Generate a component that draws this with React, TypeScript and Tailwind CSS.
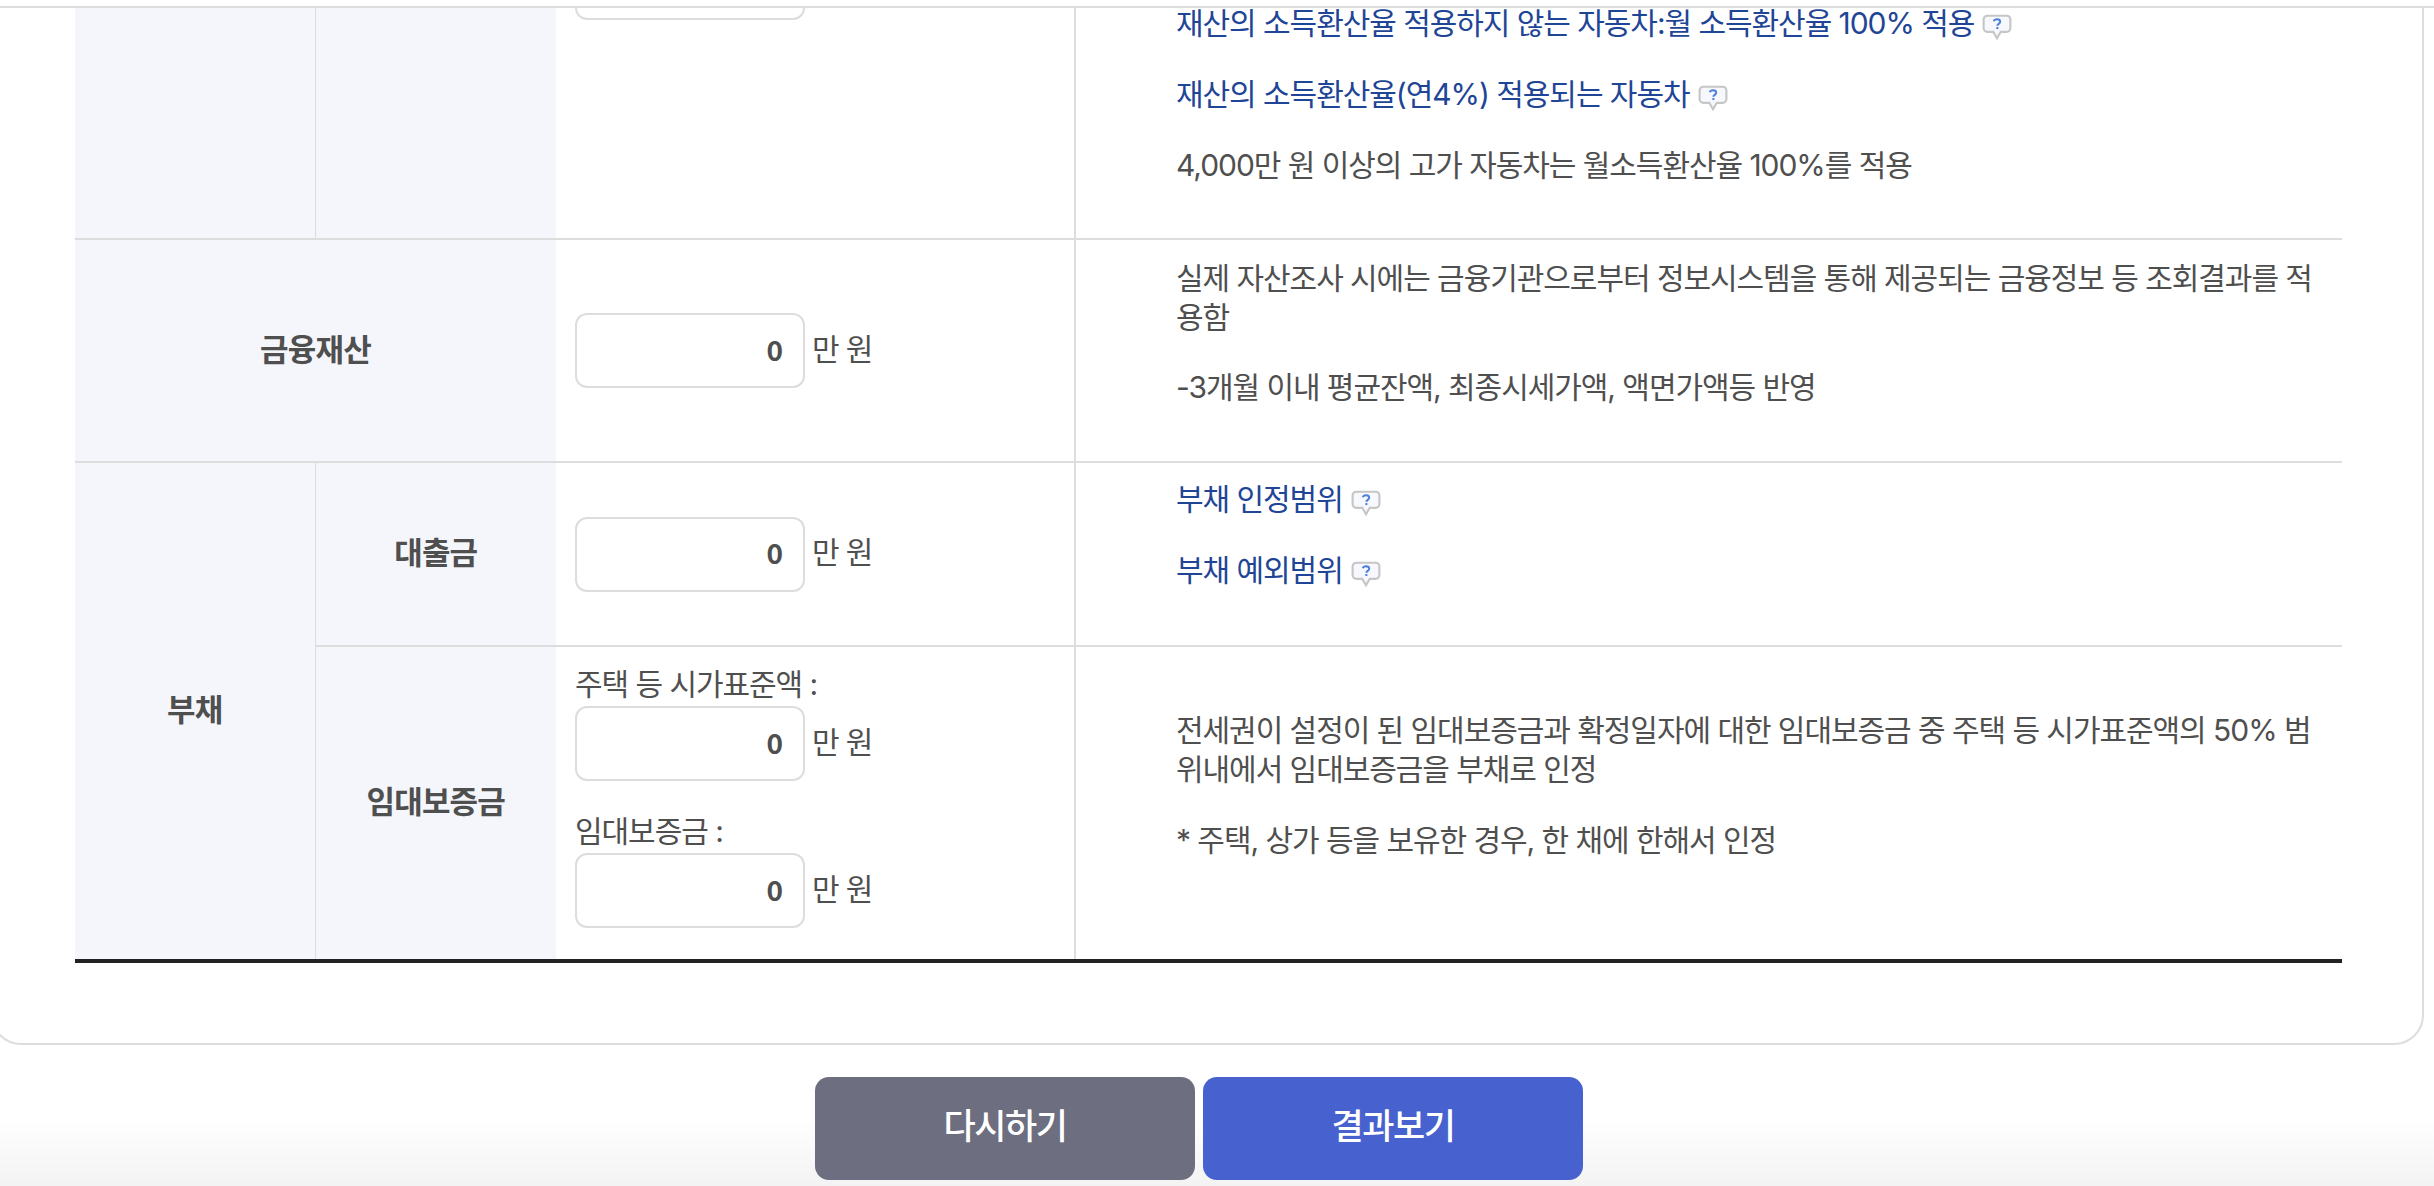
const FONT = "font-['Inter','Noto_Sans_CJK_KR','Noto_Sans_KR',sans-serif]";

function Help() {
  return (
    <svg width="30" height="26" viewBox="0 0 28 24" className="inline-block align-[-6px] ml-[8px]">
      <path d="M5 1.5h18a3.5 3.5 0 0 1 3.5 3.5v8a3.5 3.5 0 0 1-3.5 3.5h-5.5L14 22.5l-3.5-6H5A3.5 3.5 0 0 1 1.5 13V5A3.5 3.5 0 0 1 5 1.5z" fill="#f6f8fd" stroke="#c6c6c6" strokeWidth="2" />
      <path d="M11 6.6c.4-1.2 1.6-1.8 3-1.8 1.7 0 3 .9 3 2.3 0 1.9-2.7 2-2.7 3.8" fill="none" stroke="#4c7fdb" strokeWidth="1.8" />
      <rect x="13.4" y="12" width="1.9" height="1.9" fill="#4c7fdb" />
    </svg>
  );
}

function Money() {
  return (
    <div className="flex items-center">
      <div className="w-[230px] h-[75px] border-2 border-[#dddddd] rounded-[12px] bg-white flex items-center justify-end pr-[20px] pb-[3px] font-['Noto_Sans_CJK_KR',sans-serif] font-bold text-[#4f4f4f] text-[28px] tracking-normal">0</div>
      <span className="ml-[7px] pb-[3px] text-[#4f4f4f] text-[30px] leading-[39px] tracking-[-1.2px]">만 원</span>
    </div>
  );
}

const th = "bg-[#f5f6fc] border-b-2 border-[#dddddd] pb-[3px] text-center font-bold text-[#4f4f4f] text-[31px] tracking-[-0.8px]";
const thLast = "bg-[#f5f6fc] pb-[3px] text-center font-bold text-[#4f4f4f] text-[31px] tracking-[-0.8px]";
const tdInput = "border-b-2 border-[#dddddd] pl-[19px] align-middle";
const tdDesc = "border-b-2 border-l-2 border-[#dddddd] pl-[100px] pr-[20px] pb-[4px] align-middle text-left";
const link = "mb-8 text-[#1f4596]";
const para = "mb-8";

export default function App() {
  return (
    <div className={`relative w-[2434px] h-[1186px] overflow-hidden bg-[linear-gradient(to_bottom,#ffffff_1120px,#f3f3f3_1186px)] ${FONT} text-[30px] leading-[39px] text-[#4f4f4f] tracking-[-1.05px]`}>
      <div className="absolute top-0 left-0 right-0 h-[8px] bg-white border-b-2 border-[#dddddd] z-10" />
      <div className="-mt-[78px] -ml-[9px] w-[2433px] h-[1123px] border-2 border-[#dddddd] rounded-[30px] pl-[82px] pr-[80px] bg-white">
        <table className="w-[2267px] table-fixed border-collapse">
          <colgroup>
            <col className="w-[240px]" />
            <col className="w-[241px]" />
            <col className="w-[519px]" />
            <col />
          </colgroup>
          <tbody>
            <tr className="h-[315px]">
              <td className={th} />
              <td className={`${th} border-l border-l-[#dddddd]`} />
              <td className="border-b-2 border-[#dddddd] pl-[19px] align-top pt-[21px]">
                <div className="w-[230px] h-[75px] border-2 border-[#dddddd] rounded-[12px] bg-white" />
              </td>
              <td className="border-b-2 border-l-2 border-[#dddddd] pl-[100px] pr-[20px] align-bottom pb-[21px] text-left">
                <p className={link}>재산의 소득환산율 적용하지 않는 자동차:월 소득환산율 100% 적용<Help /></p>
                <p className={link}>재산의 소득환산율(연4%) 적용되는 자동차<Help /></p>
                <p className={para}>4,000만 원 이상의 고가 자동차는 월소득환산율 100%를 적용</p>
              </td>
            </tr>
            <tr className="h-[223px]">
              <th colSpan={2} className={th}>금융재산</th>
              <td className={tdInput}><Money /></td>
              <td className={tdDesc}>
                <p className="mb-[31px]">실제 자산조사 시에는 금융기관으로부터 정보시스템을 통해 제공되는 금융정보 등 조회결과를 적용함</p>
                <p className={para}>-3개월 이내 평균잔액, 최종시세가액, 액면가액등 반영</p>
              </td>
            </tr>
            <tr className="h-[184px]">
              <th rowSpan={2} className={thLast}>부채</th>
              <th className={`${th} border-l border-l-[#dddddd]`}>대출금</th>
              <td className={tdInput}><Money /></td>
              <td className="border-b-2 border-l-2 border-[#dddddd] pl-[100px] pr-[20px] pb-[6px] align-middle text-left">
                <p className={link}>부채 인정범위<Help /></p>
                <p className={link}>부채 예외범위<Help /></p>
              </td>
            </tr>
            <tr className="h-[315px] border-b-4 border-[#222222]">
              <th className={`${thLast} border-l border-l-[#dddddd]`}>임대보증금</th>
              <td className="pl-[19px] align-top pt-[20px]">
                <p className="leading-[34px] mb-[5px]">주택 등 시가표준액 :</p>
                <Money />
                <p className="mt-[33px] leading-[34px] mb-[5px]">임대보증금 :</p>
                <Money />
              </td>
              <td className="border-l-2 border-[#dddddd] pl-[100px] pr-[20px] pb-[4px] align-middle text-left">
                <p className={para}>전세권이 설정이 된 임대보증금과 확정일자에 대한 임대보증금 중 주택 등 시가표준액의 50% 범위내에서 임대보증금을 부채로 인정</p>
                <p className={para}>* 주택, 상가 등을 보유한 경우, 한 채에 한해서 인정</p>
              </td>
            </tr>
          </tbody>
        </table>
      </div>
      <div className="flex justify-center gap-[8px] mt-[32px] pr-[36px]">
        <button className="w-[380px] h-[103px] pb-[4px] rounded-[14px] bg-[#6d6e80] text-white text-[35px] font-medium tracking-[-1.4px]">다시하기</button>
        <button className="w-[380px] h-[103px] pb-[4px] rounded-[14px] bg-[#4761cf] text-white text-[35px] font-medium tracking-[-1.4px]">결과보기</button>
      </div>
    </div>
  );
}
